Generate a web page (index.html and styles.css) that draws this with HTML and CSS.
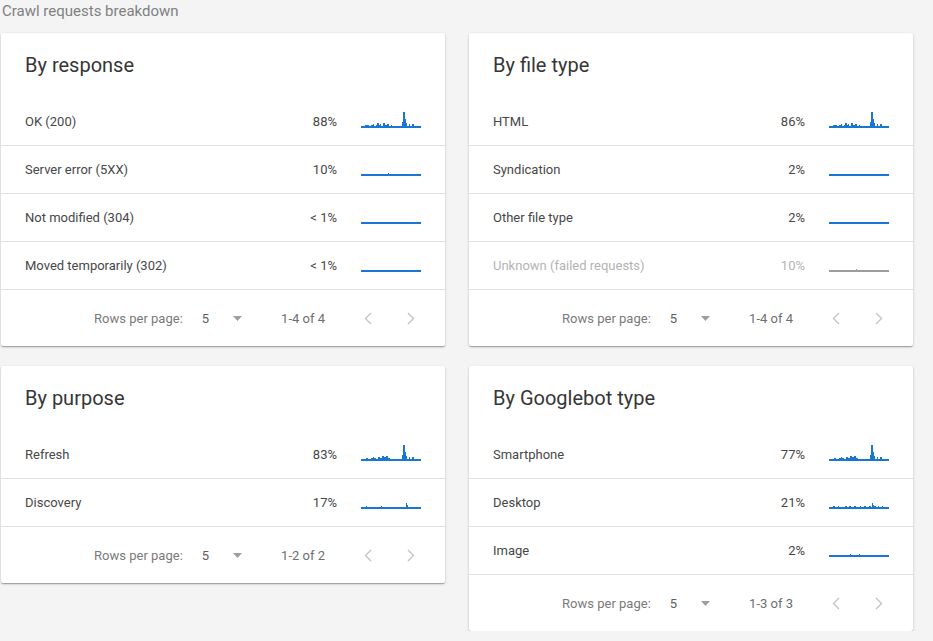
FILE: index.html
```html
<!DOCTYPE html>
<html lang="en">
<head>
<meta charset="utf-8">
<title>Crawl requests breakdown</title>
<link rel="stylesheet" href="styles.css">
</head>
<body>
<svg class="defs" width="0" height="0" aria-hidden="true">
  <defs>
    <path id="sp-busy" d="M0 18 V16 H4 V15 H8 V16 H10 V15 H12 V14 H13 V16 H15 V15 H16 V13 H18 V15 H19 V14 H20 V16 H22 V13 H24 V15 H26 V14 H28 V16 H30 V15 H31 V16 H41 V12 H42 V2 H44 V9 H45 V13 H46 V16 H48 V14 H49 V16 H51 V14 H53 V16 H60 V18 Z"/>
    <path id="sp-busy2" d="M0 18 V16 H5 V15 H7 V16 H10 V15 H12 V14 H13 V15 H15 V16 H17 V14 H19 V15 H21 V13 H23 V14 H25 V13 H27 V15 H29 V16 H41 V12 H42 V2 H44 V9 H45 V13 H46 V16 H48 V14 H49 V16 H51 V14 H53 V16 H60 V18 Z"/>
    <path id="sp-flat" d="M0 16 H60 V18 H0 Z"/>
    <path id="sp-tick" d="M0 18 V16 H27 V15 H28 V16 H60 V18 Z"/>
    <path id="sp-disc" d="M0 18 V16 H5 V15 H6 V16 H20 V15 H21 V16 H45 V12 H46 V14 H47 V16 H60 V18 Z"/>
    <path id="sp-desk" d="M0 18 V16 H4 V15 H6 V16 H9 V15 H10 V16 H16 V15 H18 V16 H20 V15 H22 V16 H25 V15 H27 V16 H31 V15 H32 V16 H35 V15 H37 V16 H40 V15 H42 V16 H43 V12 H44 V14 H45 V15 H47 V16 H49 V15 H50 V16 H53 V15 H54 V16 H60 V18 Z"/>
    <path id="sp-img" d="M0 18 V16 H21 V15 H22 V16 H30 V15 H31 V16 H60 V18 Z"/>
    <path id="chev-l" d="M7 1 L1.5 6.5 L7 12" fill="none"/>
    <path id="chev-r" d="M1 1 L6.5 6.5 L1 12" fill="none"/>
    <path id="tri" d="M0 0 H9 L4.5 5 Z"/>
  </defs>
</svg>

<main class="page">
  <h1 class="page-title">Crawl requests breakdown</h1>
  <div class="grid">

    <section class="card">
      <h2 class="card-title">By response</h2>
      <div class="row"><span class="label">OK (200)</span><span class="pct">88%</span><svg class="spark" viewBox="0 0 60 24"><use href="#sp-busy"/></svg></div>
      <div class="row"><span class="label">Server error (5XX)</span><span class="pct">10%</span><svg class="spark" viewBox="0 0 60 24"><use href="#sp-tick"/></svg></div>
      <div class="row"><span class="label">Not modified (304)</span><span class="pct">&lt; 1%</span><svg class="spark" viewBox="0 0 60 24"><use href="#sp-flat"/></svg></div>
      <div class="row"><span class="label">Moved temporarily (302)</span><span class="pct">&lt; 1%</span><svg class="spark" viewBox="0 0 60 24"><use href="#sp-flat"/></svg></div>
      <div class="footer">
        <span class="rpp">Rows per page:</span>
        <span class="sel">5</span>
        <svg class="tri" viewBox="0 0 9 5"><use href="#tri"/></svg>
        <span class="range">1-4 of 4</span>
        <svg class="chev prev" viewBox="0 0 8 13"><use href="#chev-l"/></svg>
        <svg class="chev next" viewBox="0 0 8 13"><use href="#chev-r"/></svg>
      </div>
    </section>

    <section class="card">
      <h2 class="card-title">By file type</h2>
      <div class="row"><span class="label">HTML</span><span class="pct">86%</span><svg class="spark" viewBox="0 0 60 24"><use href="#sp-busy"/></svg></div>
      <div class="row"><span class="label">Syndication</span><span class="pct">2%</span><svg class="spark" viewBox="0 0 60 24"><use href="#sp-flat"/></svg></div>
      <div class="row"><span class="label">Other file type</span><span class="pct">2%</span><svg class="spark" viewBox="0 0 60 24"><use href="#sp-flat"/></svg></div>
      <div class="row row-muted"><span class="label">Unknown (failed requests)</span><span class="pct">10%</span><svg class="spark" viewBox="0 0 60 24"><use href="#sp-tick"/></svg></div>
      <div class="footer">
        <span class="rpp">Rows per page:</span>
        <span class="sel">5</span>
        <svg class="tri" viewBox="0 0 9 5"><use href="#tri"/></svg>
        <span class="range">1-4 of 4</span>
        <svg class="chev prev" viewBox="0 0 8 13"><use href="#chev-l"/></svg>
        <svg class="chev next" viewBox="0 0 8 13"><use href="#chev-r"/></svg>
      </div>
    </section>

    <section class="card">
      <h2 class="card-title">By purpose</h2>
      <div class="row"><span class="label">Refresh</span><span class="pct">83%</span><svg class="spark" viewBox="0 0 60 24"><use href="#sp-busy2"/></svg></div>
      <div class="row"><span class="label">Discovery</span><span class="pct">17%</span><svg class="spark" viewBox="0 0 60 24"><use href="#sp-disc"/></svg></div>
      <div class="footer">
        <span class="rpp">Rows per page:</span>
        <span class="sel">5</span>
        <svg class="tri" viewBox="0 0 9 5"><use href="#tri"/></svg>
        <span class="range">1-2 of 2</span>
        <svg class="chev prev" viewBox="0 0 8 13"><use href="#chev-l"/></svg>
        <svg class="chev next" viewBox="0 0 8 13"><use href="#chev-r"/></svg>
      </div>
    </section>

    <section class="card">
      <h2 class="card-title">By Googlebot type</h2>
      <div class="row"><span class="label">Smartphone</span><span class="pct">77%</span><svg class="spark" viewBox="0 0 60 24"><use href="#sp-busy2"/></svg></div>
      <div class="row"><span class="label">Desktop</span><span class="pct">21%</span><svg class="spark" viewBox="0 0 60 24"><use href="#sp-desk"/></svg></div>
      <div class="row"><span class="label">Image</span><span class="pct">2%</span><svg class="spark" viewBox="0 0 60 24"><use href="#sp-img"/></svg></div>
      <div class="footer">
        <span class="rpp">Rows per page:</span>
        <span class="sel">5</span>
        <svg class="tri" viewBox="0 0 9 5"><use href="#tri"/></svg>
        <span class="range">1-3 of 3</span>
        <svg class="chev prev" viewBox="0 0 8 13"><use href="#chev-l"/></svg>
        <svg class="chev next" viewBox="0 0 8 13"><use href="#chev-r"/></svg>
      </div>
    </section>

  </div>
</main>
</body>
</html>
```

FILE: styles.css
```css
html, body {
  margin: 0;
  padding: 0;
}

body {
  background: #f4f4f4;
  font-family: Roboto, "Liberation Sans", Arial, sans-serif;
  color: #333;
}

.defs {
  position: absolute;
  width: 0;
  height: 0;
  overflow: hidden;
}

.page {
  padding: 0 0 0 1px;
}

.page-title {
  margin: 0 0 11px 1px;
  font-size: 15px;
  line-height: 22px;
  font-weight: 400;
  color: #808080;
}

.grid {
  display: grid;
  grid-template-columns: 444px 444px;
  column-gap: 24px;
  row-gap: 20px;
  align-items: start;
}

.card {
  background: #fff;
  border-radius: 2px;
  box-shadow: 0 1px 3px rgba(0, 0, 0, 0.2), 0 1px 1px rgba(0, 0, 0, 0.14), 0 2px 1px -1px rgba(0, 0, 0, 0.12);
}

.card-title {
  margin: 0;
  height: 65px;
  display: flex;
  align-items: center;
  padding: 0 24px 2px;
  box-sizing: border-box;
  font-size: 20px;
  font-weight: 400;
  color: #363636;
}

.row {
  height: 47px;
  border-bottom: 1px solid #e0e0e0;
  display: flex;
  align-items: center;
  padding: 0 24px;
  font-size: 13px;
  color: #474747;
}

.label {
  flex: 1;
}

.pct {
  text-align: right;
}

.spark {
  width: 60px;
  height: 24px;
  margin-left: 24px;
  color: #1976d2;
  fill: currentColor;
}

.row-muted {
  color: #b3b3b3;
}

.row-muted .spark {
  color: #9e9e9e;
}

.footer {
  height: 56px;
  display: flex;
  align-items: center;
  justify-content: flex-end;
  padding-right: 30px;
  font-size: 13px;
  color: #7a7a7a;
}

.sel {
  margin-left: 19px;
  color: #5e5e5e;
}

.tri {
  width: 9px;
  height: 5px;
  margin-left: 24px;
  fill: #9e9e9e;
}

.range {
  margin-left: 39px;
  color: #6e6e6e;
}

.chev {
  width: 8px;
  height: 13px;
  stroke: #c4c4c4;
  stroke-width: 1.4;
  fill: none;
}

.prev {
  margin-left: 39px;
}

.next {
  margin-left: 35px;
}
```
